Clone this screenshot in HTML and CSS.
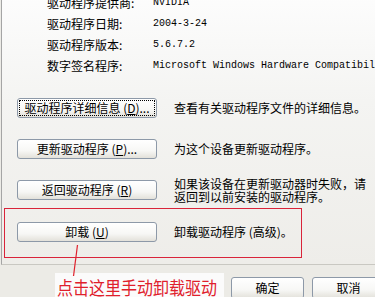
FILE: index.html
```html
<!DOCTYPE html>
<html lang="zh-CN">
<head>
<meta charset="utf-8">
<link rel="stylesheet" href="styles.css">
</head>
<body>
<div class="page">
  <div class="panel">
    <div class="info">
      <div class="label">驱动程序提供商:</div><div class="value">NVIDIA</div>
      <div class="label">驱动程序日期:</div><div class="value">2004-3-24</div>
      <div class="label">驱动程序版本:</div><div class="value">5.6.7.2</div>
      <div class="label">数字签名程序:</div><div class="value">Microsoft Windows Hardware Compatibility Publisher</div>
    </div>
    <div class="actions">
      <div class="action">
        <button class="btn focused">驱动程序详细信息 (<u>D</u>)...</button>
        <div class="desc">查看有关驱动程序文件的详细信息。</div>
      </div>
      <div class="action">
        <button class="btn">更新驱动程序 (<u>P</u>)...</button>
        <div class="desc">为这个设备更新驱动程序。</div>
      </div>
      <div class="action">
        <button class="btn">返回驱动程序 (<u>R</u>)</button>
        <div class="desc two">如果该设备在更新驱动器时失败，请<br>返回到以前安装的驱动程序。</div>
      </div>
      <div class="highlight">
        <div class="action">
          <button class="btn">卸载 (<u>U</u>)</button>
          <div class="desc">卸载驱动程序 (高级)。</div>
        </div>
      </div>
    </div>
  </div>
  <div class="footer">
    <div class="note"><span class="note-text">点击这里手动卸载驱动</span></div>
    <button class="btn dlg">确定</button>
    <button class="btn dlg">取消</button>
  </div>
  <svg class="pointer" width="375" height="297" viewBox="0 0 375 297">
    <line x1="77.5" y1="245" x2="73.5" y2="276" stroke="#e0202c" stroke-width="1.2"/>
  </svg>
</div>
</body>
</html>
```

FILE: styles.css
```css
html, body {
  margin: 0;
  padding: 0;
}
body {
  width: 375px;
  height: 297px;
  overflow: hidden;
  background: #ecebe6;
  font-family: "Noto Sans CJK SC", "Liberation Sans", sans-serif;
  font-size: 12px;
  color: #000;
}
.page {
  position: relative;
  width: 375px;
  height: 297px;
  overflow: hidden;
}
.panel {
  margin-left: 1px;
  width: 374px;
  height: 273px;
  margin-top: -8px;
  border-left: 1px solid #a5a5a5;
  border-bottom: 1px solid #c9c8c2;
  background: linear-gradient(#fdfdfd, #f4f4f2 40%, #eeede9);
  box-sizing: border-box;
  overflow: hidden;
}
.info {
  display: grid;
  grid-template-columns: 106px 1fr;
  grid-auto-rows: 21px;
  align-items: center;
  padding-left: 45px;
  white-space: nowrap;
}
.label {
  font-size: 12px;
  line-height: 14px;
}
.value {
  font-family: "Liberation Mono", monospace;
  font-size: 10px;
  line-height: 12px;
  overflow: hidden;
}
.actions {
  display: flex;
  flex-direction: column;
  gap: 21px;
  padding-top: 22px;
  padding-left: 15px;
}
.action {
  display: flex;
  align-items: center;
  gap: 17px;
  height: 20px;
}
.btn {
  box-sizing: border-box;
  width: 140px;
  height: 20px;
  padding: 0;
  border: 1px solid #8d99a8;
  border-radius: 3px;
  background: linear-gradient(#ffffff, #f7f7f5 60%, #e3e1da);
  font-family: "Noto Sans CJK SC", sans-serif;
  font-size: 12px;
  line-height: 16px;
  color: #000;
  text-align: center;
  white-space: nowrap;
  flex: none;
}
.btn u {
  text-decoration: underline;
}
.btn.focused {
  outline: 1px dotted #000;
  outline-offset: -3px;
}
.desc {
  font-size: 12px;
  line-height: 14px;
  white-space: nowrap;
}
.desc.two {
  line-height: 13px;
}
.highlight {
  margin-left: -13px;
  margin-top: -13px;
  width: 298px;
  height: 50px;
  box-sizing: border-box;
  border: 1px solid #d9243a;
  padding: 13px 0 0 12px;
}
.footer {
  display: flex;
  align-items: flex-start;
  padding-left: 55px;
}
.note {
  width: 169px;
  height: 26px;
  margin-top: 8px;
  background: #fbfbfb;
  color: #e0202c;
  font-size: 16px;
  line-height: 22px;
  padding-left: 2px;
  box-sizing: border-box;
  flex: none;
}
.note-text {
  display: inline-block;
  transform: scaleY(1.15);
  transform-origin: left top;
  margin-top: 1px;
}
.btn.dlg {
  width: 73px;
  height: 22px;
  margin-top: 12px;
  margin-left: 7px;
}
.btn.dlg + .btn.dlg {
  margin-left: 8px;
}
.pointer {
  position: absolute;
  left: 0;
  top: 0;
  pointer-events: none;
}
```
